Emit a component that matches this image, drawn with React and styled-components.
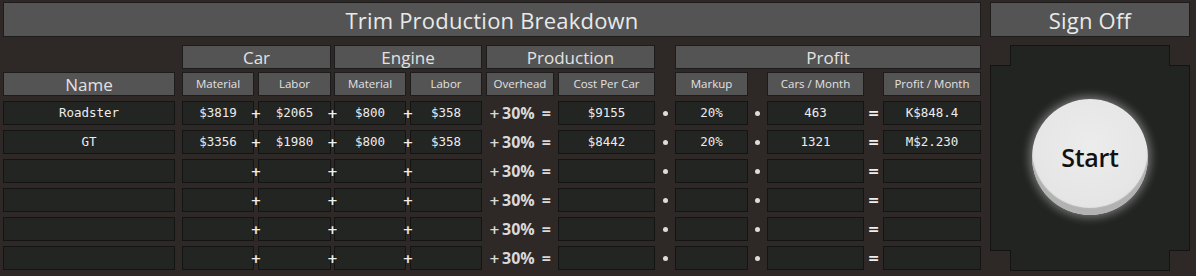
import React from 'react';
import styled, { createGlobalStyle } from 'styled-components';

const Global = createGlobalStyle`
  html, body { margin: 0; padding: 0; background: #2e2826; }
  body { font-family: "Open Sans", "DejaVu Sans", sans-serif; }
`;

const COLS =
  '172px 7px 72px 4px 73px 3px 72px 4px 72px 4px 68px 4px 97px 20px 73px 19px 97px 19px 98px';

const Page = styled.div`
  display: flex;
  gap: 9px;
  padding: 2px 3px 0;
  width: 1196px;
  height: 276px;
  box-sizing: border-box;
`;

const Main = styled.div`
  width: 978px;
  display: flex;
  flex-direction: column;
`;

const Side = styled.div`
  width: 200px;
  display: flex;
  flex-direction: column;
`;

const Bar = styled.div`
  height: 35px;
  box-sizing: border-box;
  background: #545454;
  border: 1px solid #1c1c1c;
  display: flex;
  align-items: center;
  justify-content: center;
  color: #e9e9e9;
  font-size: 22px;
  letter-spacing: 0.2px;
`;

const Table = styled.div`
  margin-top: 8px;
  display: flex;
  flex-direction: column;
`;

const GridRow = styled.div`
  display: grid;
  grid-template-columns: ${COLS};
  height: 24px;
  margin-bottom: ${(p) => p.$after || 0}px;
`;

const Rows = styled.div`
  display: flex;
  flex-direction: column;
  gap: 5px;
`;

const Head = styled.div`
  grid-column: ${(p) => p.$col};
  background: #545454;
  border: 1px solid #1c1c1c;
  box-sizing: border-box;
  display: flex;
  align-items: center;
  justify-content: center;
  color: #e2e2e2;
  font-size: ${(p) => p.$size || 11.5}px;
  line-height: 1;
  white-space: nowrap;
`;

const Cell = styled.div`
  grid-column: ${(p) => p.$col};
  background: #232523;
  border: 1px solid #141414;
  box-sizing: border-box;
  display: flex;
  align-items: center;
  justify-content: center;
  color: #ececec;
  font-family: "DejaVu Sans Mono", "Liberation Mono", monospace;
  font-size: 12.5px;
  line-height: 1;
  white-space: nowrap;
`;

const Op = styled.div`
  grid-column: ${(p) => p.$col};
  min-width: 0;
  display: flex;
  align-items: center;
  justify-content: center;
  position: relative;
  z-index: 1;
  color: #eeeeee;
  font-family: "DejaVu Sans", sans-serif;
  font-weight: bold;
  font-size: ${(p) => p.$size || 13}px;
  line-height: 1;
  white-space: nowrap;
`;

const Dot = styled.span`
  width: 5px;
  height: 5px;
  border-radius: 50%;
  background: #dcdcdc;
  flex: none;
`;

const Overhead = styled.div`
  grid-column: ${(p) => p.$col};
  display: flex;
  align-items: center;
  justify-content: center;
  gap: 7px;
  color: #d9d9d9;
  font-weight: 700;
  font-size: 16px;
  line-height: 1;
  white-space: nowrap;
`;

const Plus = styled.span`
  font-family: "DejaVu Sans", sans-serif;
  font-size: 13px;
  margin-right: -5px;
`;

const Panel = styled.div`
  margin-top: 28px;
  height: 186px;
  box-sizing: border-box;
  position: relative;
  background: #222422;
  border: 1px solid #121312;
  display: flex;
  align-items: center;
  justify-content: center;

  &::before,
  &::after {
    content: '';
    position: absolute;
    left: 19px;
    right: 19px;
    height: 21px;
    box-sizing: border-box;
    background: #222422;
    border: 1px solid #121312;
  }
  &::before {
    top: -21px;
    border-bottom: none;
  }
  &::after {
    bottom: -21px;
    border-top: none;
  }
`;

const StartButton = styled.button`
  position: relative;
  z-index: 1;
  width: 116px;
  height: 116px;
  margin-top: -2px;
  border-radius: 50%;
  border: none;
  padding: 0;
  background: radial-gradient(circle at 50% 40%, #ececec 0%, #e6e6e6 60%, #dedede 100%);
  box-shadow: inset 0 -7px 1px #b2b2b2, 0 0 8px 3px rgba(255, 255, 255, 0.35);
  color: #111111;
  font-family: "Open Sans", sans-serif;
  font-weight: 600;
  font-size: 25px;
  letter-spacing: -0.3px;
  cursor: pointer;
`;

const data = [
  { name: 'Roadster', cm: '$3819', cl: '$2065', em: '$800', el: '$358', cost: '$9155', markup: '20%', cars: '463', profit: 'K$848.4' },
  { name: 'GT', cm: '$3356', cl: '$1980', em: '$800', el: '$358', cost: '$8442', markup: '20%', cars: '1321', profit: 'M$2.230' },
  {}, {}, {}, {},
];

export default function App() {
  return (
    <>
      <Global />
      <Page>
        <Main>
          <Bar>Trim Production Breakdown</Bar>
          <Table>
            <GridRow $after={3}>
              <Head $col="3 / 6" $size={17}>Car</Head>
              <Head $col="7 / 10" $size={17}>Engine</Head>
              <Head $col="11 / 14" $size={17}>Production</Head>
              <Head $col="15 / 20" $size={17}>Profit</Head>
            </GridRow>
            <GridRow $after={5}>
              <Head $col="1" $size={17}>Name</Head>
              <Head $col="3">Material</Head>
              <Head $col="5">Labor</Head>
              <Head $col="7">Material</Head>
              <Head $col="9">Labor</Head>
              <Head $col="11">Overhead</Head>
              <Head $col="13">Cost Per Car</Head>
              <Head $col="15">Markup</Head>
              <Head $col="17">Cars / Month</Head>
              <Head $col="19">Profit / Month</Head>
            </GridRow>
            <Rows>
              {data.map((r, i) => (
                <GridRow key={i}>
                  <Cell $col="1">{r.name}</Cell>
                  <Cell $col="3">{r.cm}</Cell>
                  <Op $col="4">+</Op>
                  <Cell $col="5">{r.cl}</Cell>
                  <Op $col="6">+</Op>
                  <Cell $col="7">{r.em}</Cell>
                  <Op $col="8">+</Op>
                  <Cell $col="9">{r.el}</Cell>
                  <Overhead $col="11">
                    <Plus>+</Plus>
                    <span>30%</span>
                    <span>=</span>
                  </Overhead>
                  <Cell $col="13">{r.cost}</Cell>
                  <Op $col="14"><Dot /></Op>
                  <Cell $col="15">{r.markup}</Cell>
                  <Op $col="16"><Dot /></Op>
                  <Cell $col="17">{r.cars}</Cell>
                  <Op $col="18" $size={14}>=</Op>
                  <Cell $col="19">{r.profit}</Cell>
                </GridRow>
              ))}
            </Rows>
          </Table>
        </Main>
        <Side>
          <Bar>Sign Off</Bar>
          <Panel>
            <StartButton>Start</StartButton>
          </Panel>
        </Side>
      </Page>
    </>
  );
}
